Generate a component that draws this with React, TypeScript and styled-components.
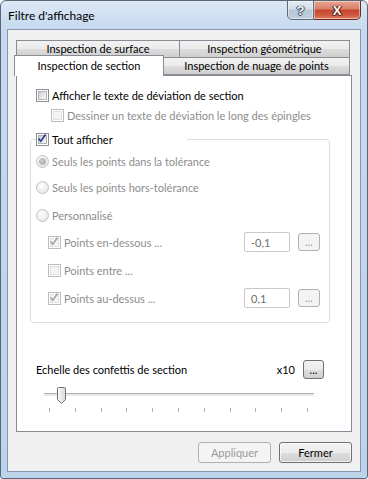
import React from 'react';
import styled, { createGlobalStyle } from 'styled-components';

const GlobalStyle = createGlobalStyle`
  html, body {
    margin: 0;
    padding: 0;
    background: #ffffff;
  }
  body {
    font-family: Lato, 'Liberation Sans', sans-serif;
    font-size: 11px;
    color: #000;
  }
`;

const StyledWindow = styled.div`
  width: 368px;
  height: 479px;
  box-sizing: border-box;
  border: 1px solid #5b6675;
  border-radius: 6px 6px 3px 3px;
  background: linear-gradient(180deg, #dce8f6 0px, #c6d9ef 28px, #bcd3ec 100%);
  display: flex;
  flex-direction: column;
  overflow: hidden;
`;

const StyledTitleBar = styled.div`
  height: 28px;
  display: flex;
  align-items: flex-start;
  padding-left: 7px;
  padding-right: 6px;
`;

const StyledTitle = styled.div`
  line-height: 29px;
  font-size: 12px;
  color: #000;
`;

const StyledCaptionButtons = styled.div`
  margin-left: auto;
  display: flex;
  margin-top: -1px;
`;

const StyledCaptionButton = styled.div<{ $close?: boolean }>`
  width: ${(p) => (p.$close ? '47px' : '27px')};
  height: 20px;
  box-sizing: border-box;
  border: 1px solid ${(p) => (p.$close ? '#6b2b22' : '#5e6b7c')};
  border-left-width: ${(p) => (p.$close ? '0' : '1px')};
  border-radius: ${(p) => (p.$close ? '0 0 5px 0' : '0 0 0 5px')};
  background: ${(p) =>
    p.$close
      ? 'linear-gradient(180deg, #e8a493 0%, #d9806b 45%, #c4452d 50%, #cf5a3f 80%, #e0866a 100%)'
      : 'linear-gradient(180deg, #e4ebf3 0%, #d3dde9 45%, #b8c7d8 50%, #c0cedf 100%)'};
  box-shadow: inset 0 0 0 1px rgba(255, 255, 255, 0.45);
  display: flex;
  align-items: center;
  justify-content: center;
  font-family: 'Liberation Sans', sans-serif;
  font-weight: bold;
  font-size: 13px;
  color: ${(p) => (p.$close ? '#ffffff' : '#f4f7fb')};
  text-shadow: ${(p) =>
    p.$close
      ? '0 0 1px #4a1a10, 1px 0 1px #4a1a10, -1px 0 1px #4a1a10, 0 1px 1px #4a1a10'
      : '0 0 1px #3a4a5f, 1px 0 1px #3a4a5f, -1px 0 1px #3a4a5f, 0 1px 1px #3a4a5f'};
`;

const StyledClient = styled.div`
  flex: 1;
  margin: 0 6px 6px 6px;
  border: 1px solid #8497ae;
  background: #f0f0f0;
  padding: 10px 8px 0 8px;
  display: flex;
  flex-direction: column;
`;

const StyledTabRow = styled.div<{ $back?: boolean }>`
  display: flex;
  height: ${(p) => (p.$back ? '17px' : '18px')};
  align-items: flex-start;
  padding-right: 2px;
`;

const StyledTab = styled.div<{ $width: number; $selected?: boolean }>`
  width: ${(p) => p.$width}px;
  height: ${(p) => (p.$selected ? '21px' : '18px')};
  margin-top: ${(p) => (p.$selected ? '-2px' : '0')};
  margin-left: ${(p) => (p.$selected ? '-2px' : '0')};
  box-sizing: border-box;
  border: 1px solid #898c95;
  border-bottom: ${(p) => (p.$selected ? 'none' : '1px solid #898c95')};
  background: ${(p) =>
    p.$selected ? '#ffffff' : 'linear-gradient(180deg, #f2f2f2 0%, #ebebeb 50%, #dddddd 51%, #cfcfcf 100%)'};
  position: relative;
  z-index: ${(p) => (p.$selected ? 2 : 0)};
  display: flex;
  justify-content: center;
  align-items: ${(p) => (p.$selected ? 'flex-start' : 'center')};
  padding-top: ${(p) => (p.$selected ? '3px' : '0')};
  line-height: 14px;
  white-space: nowrap;
  & + & {
    border-left: none;
  }
`;

const StyledPanel = styled.div`
  height: 357px;
  box-sizing: border-box;
  border: 1px solid #898c95;
  background: #ffffff;
  padding-top: 9px;
  display: flex;
  flex-direction: column;
`;

const StyledRow = styled.div<{ $indent: number; $gap?: number }>`
  height: 20px;
  display: flex;
  align-items: center;
  padding-left: ${(p) => p.$indent}px;
  margin-top: ${(p) => p.$gap ?? 0}px;
  white-space: nowrap;
`;

const StyledLabel = styled.span<{ $disabled?: boolean }>`
  margin-left: 3px;
  color: ${(p) => (p.$disabled ? '#8d8d8d' : '#000')};
`;

const StyledBox = styled.span<{ $disabled?: boolean }>`
  width: 13px;
  height: 13px;
  box-sizing: border-box;
  flex: none;
  border: 1px solid ${(p) => (p.$disabled ? '#bcbcbc' : '#8e8f8f')};
  background: #ffffff;
  padding: 1px;
  display: flex;
`;

const StyledBoxInner = styled.span<{ $disabled?: boolean }>`
  flex: 1;
  border: 1px solid ${(p) => (p.$disabled ? '#e0e0e0' : '#aeb3b9')};
  background: ${(p) =>
    p.$disabled ? '#f4f4f4' : 'linear-gradient(135deg, #cbcfd5 0%, #e5e7ea 55%, #f6f6f6 100%)'};
  position: relative;
`;

const StyledCheckMark = styled.svg`
  position: absolute;
  left: -2px;
  top: -3px;
`;

const Check = ({ checked, disabled }: { checked?: boolean; disabled?: boolean }) => (
  <StyledBox $disabled={disabled}>
    <StyledBoxInner $disabled={disabled}>
      {checked && (
        <StyledCheckMark width="10" height="10" viewBox="0 0 10 10">
          <path
            d="M1.5 5.5 L3.8 8.2 L8.6 1.6"
            fill="none"
            stroke={disabled ? '#a3a3a3' : '#2b3f86'}
            strokeWidth="1.7"
          />
        </StyledCheckMark>
      )}
    </StyledBoxInner>
  </StyledBox>
);

const StyledRadio = styled.span<{ $selected?: boolean }>`
  width: 13px;
  height: 13px;
  box-sizing: border-box;
  flex: none;
  border-radius: 50%;
  border: 1px solid #c2c2c2;
  background: radial-gradient(circle at 40% 35%, #ffffff 0%, #ececec 60%, #dcdcdc 100%);
  display: flex;
  align-items: center;
  justify-content: center;
  &::after {
    content: '';
    display: ${(p) => (p.$selected ? 'block' : 'none')};
    width: 5px;
    height: 5px;
    border-radius: 50%;
    background: radial-gradient(circle at 40% 35%, #d0d0d0 0%, #9a9a9a 100%);
    box-shadow: 0 0 0 1px #b8b8b8;
  }
`;

const StyledGroup = styled.fieldset`
  margin: 4px 21px 0 13px;
  padding: 0 9px 14px 0;
  border: 1px solid #d5dfe5;
  border-radius: 3px;
  min-width: 0;
`;

const StyledLegend = styled.legend`
  padding: 0;
  margin-left: 5px;
  width: 151px;
  height: 20px;
  display: flex;
  align-items: center;
  white-space: nowrap;
`;

const StyledInput = styled.div`
  margin-left: auto;
  width: 46px;
  height: 20px;
  box-sizing: border-box;
  border: 1px solid #c9c9c9;
  border-radius: 2px;
  background: #ffffff;
  padding-left: 6px;
  display: flex;
  align-items: center;
  color: #6d6d6d;
`;

const StyledSmallButton = styled.div<{ $disabled?: boolean }>`
  width: ${(p) => (p.$disabled ? '22px' : '21px')};
  height: ${(p) => (p.$disabled ? '18px' : '19px')};
  margin-left: ${(p) => (p.$disabled ? '8px' : '0')};
  box-sizing: border-box;
  border: 1px solid ${(p) => (p.$disabled ? '#adb2b5' : '#707070')};
  border-radius: 3px;
  background: ${(p) =>
    p.$disabled ? '#f4f4f4' : 'linear-gradient(180deg, #f2f2f2 0%, #ebebeb 50%, #dddddd 51%, #cfcfcf 100%)'};
  display: flex;
  align-items: flex-end;
  justify-content: center;
  padding-bottom: 3px;
  font-size: 11px;
  line-height: 10px;
  color: ${(p) => (p.$disabled ? '#9a9a9a' : '#000')};
`;

const StyledScaleRow = styled.div`
  height: 20px;
  margin-top: 36px;
  padding-left: 19px;
  padding-right: 27px;
  display: flex;
  align-items: center;
`;

const StyledScaleValue = styled.span`
  margin-left: auto;
  margin-right: 8px;
`;

const StyledSlider = styled.div`
  margin: 6px 0 0 27px;
  width: 270px;
  height: 28px;
  position: relative;
`;

const StyledTrack = styled.div`
  position: absolute;
  left: 0;
  right: 0;
  top: 8px;
  height: 3px;
  box-sizing: border-box;
  border-top: 1px solid #b0b0b0;
  border-bottom: 1px solid #e7eaea;
  background: #e7eaea;
`;

const StyledThumb = styled.svg`
  position: absolute;
  left: 12px;
  top: 2px;
`;

const StyledTick = styled.span`
  position: absolute;
  top: 23px;
  width: 1px;
  height: 4px;
  background: #b0b0b0;
`;

const StyledFooter = styled.div`
  display: flex;
  justify-content: flex-end;
  gap: 8px;
  margin-top: 10px;
`;

const StyledButton = styled.div<{ $disabled?: boolean }>`
  width: 73px;
  height: 21px;
  box-sizing: border-box;
  border: 1px solid ${(p) => (p.$disabled ? '#adb2b5' : '#707070')};
  border-radius: 3px;
  background: ${(p) =>
    p.$disabled ? '#f4f4f4' : 'linear-gradient(180deg, #f2f2f2 0%, #ebebeb 50%, #dddddd 51%, #cfcfcf 100%)'};
  box-shadow: ${(p) => (p.$disabled ? 'none' : 'inset 0 0 0 1px rgba(255,255,255,0.7)')};
  display: flex;
  align-items: center;
  justify-content: center;
  color: ${(p) => (p.$disabled ? '#9a9a9a' : '#000')};
`;

const ticks = Array.from({ length: 11 }, (_, i) => 5 + Math.round(i * 25.8));

const App = () => {
  return (
    <>
      <GlobalStyle />
      <StyledWindow>
        <StyledTitleBar>
          <StyledTitle>Filtre d'affichage</StyledTitle>
          <StyledCaptionButtons>
            <StyledCaptionButton>?</StyledCaptionButton>
            <StyledCaptionButton $close>X</StyledCaptionButton>
          </StyledCaptionButtons>
        </StyledTitleBar>
        <StyledClient>
          <StyledTabRow $back>
            <StyledTab $width={164}>Inspection de surface</StyledTab>
            <StyledTab $width={170}>Inspection géométrique</StyledTab>
          </StyledTabRow>
          <StyledTabRow>
            <StyledTab $width={150} $selected>
              Inspection de section
            </StyledTab>
            <StyledTab $width={186}>Inspection de nuage de points</StyledTab>
          </StyledTabRow>
          <StyledPanel>
            <StyledRow $indent={19}>
              <Check />
              <StyledLabel>Afficher le texte de déviation de section</StyledLabel>
            </StyledRow>
            <StyledRow $indent={34}>
              <Check disabled />
              <StyledLabel $disabled>Dessiner un texte de déviation le long des épingles</StyledLabel>
            </StyledRow>
            <StyledGroup>
              <StyledLegend>
                <Check checked />
                <StyledLabel>Tout afficher</StyledLabel>
              </StyledLegend>
              <StyledRow $indent={5} $gap={2}>
                <StyledRadio $selected />
                <StyledLabel $disabled>Seuls les points dans la tolérance</StyledLabel>
              </StyledRow>
              <StyledRow $indent={5} $gap={6}>
                <StyledRadio />
                <StyledLabel $disabled>Seuls les points hors-tolérance</StyledLabel>
              </StyledRow>
              <StyledRow $indent={5} $gap={8}>
                <StyledRadio />
                <StyledLabel $disabled>Personnalisé</StyledLabel>
              </StyledRow>
              <StyledRow $indent={17} $gap={7}>
                <Check checked disabled />
                <StyledLabel $disabled>Points en-dessous ...</StyledLabel>
                <StyledInput>-0,1</StyledInput>
                <StyledSmallButton $disabled>...</StyledSmallButton>
              </StyledRow>
              <StyledRow $indent={17} $gap={8}>
                <Check disabled />
                <StyledLabel $disabled>Points entre ...</StyledLabel>
              </StyledRow>
              <StyledRow $indent={17} $gap={8}>
                <Check checked disabled />
                <StyledLabel $disabled>Points au-dessus ...</StyledLabel>
                <StyledInput>0,1</StyledInput>
                <StyledSmallButton $disabled>...</StyledSmallButton>
              </StyledRow>
            </StyledGroup>
            <StyledScaleRow>
              <span>Echelle des confettis de section</span>
              <StyledScaleValue>x10</StyledScaleValue>
              <StyledSmallButton>...</StyledSmallButton>
            </StyledScaleRow>
            <StyledSlider>
              <StyledTrack />
              {ticks.map((x) => (
                <StyledTick key={x} style={{ left: x }} />
              ))}
              <StyledThumb width="11" height="18" viewBox="0 0 11 18">
                <defs>
                  <linearGradient id="thumbFill" x1="0" y1="0" x2="1" y2="0">
                    <stop offset="0" stopColor="#fbfbfb" />
                    <stop offset="1" stopColor="#d8d8d8" />
                  </linearGradient>
                </defs>
                <path
                  d="M1.5 1.5 Q1.5 0.5 2.5 0.5 L8.5 0.5 Q9.5 0.5 9.5 1.5 L9.5 12.5 L5.5 16.5 L1.5 12.5 Z"
                  fill="url(#thumbFill)"
                  stroke="#6f6f6f"
                  strokeWidth="1"
                />
              </StyledThumb>
            </StyledSlider>
          </StyledPanel>
          <StyledFooter>
            <StyledButton $disabled>Appliquer</StyledButton>
            <StyledButton>Fermer</StyledButton>
          </StyledFooter>
        </StyledClient>
      </StyledWindow>
    </>
  );
};

export default App;
